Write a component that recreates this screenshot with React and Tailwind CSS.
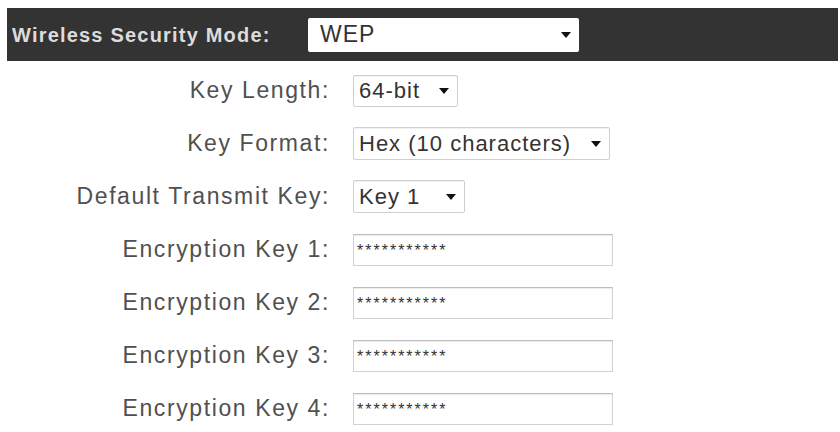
import React from "react";

const Arrow = () => (
  <svg width="10" height="6" viewBox="0 0 10 6" className="shrink-0">
    <path d="M0 0 H10 L5 6 Z" fill="#111" />
  </svg>
);

const Select = ({ value, width, height = 32 }) => (
  <div
    className="flex items-center justify-between bg-white border border-[#cfcfcf] rounded-[2px] pl-[5px] pr-[8px] shadow-[inset_0_1px_1px_rgba(0,0,0,0.06)]"
    style={{ width, height }}
  >
    <span className="text-[22px] tracking-[1px] text-[#333] leading-none">{value}</span>
    <Arrow />
  </div>
);

const KeyInput = () => (
  <div className="w-[260px] h-[32px] bg-white border border-[#d2d2d2] border-t-[#bdbdbd] pl-[3px] pt-[4px] shadow-[inset_0_1px_1px_rgba(0,0,0,0.08)]">
    <span className="text-[16px] tracking-[2px] text-[#333] leading-none">***********</span>
  </div>
);

const Row = ({ label, children }) => (
  <div className="flex items-center h-[53px]">
    <div className="w-[330px] text-right text-[23px] tracking-[1.6px] text-[#505050] leading-none">{label}</div>
    <div className="ml-[23px] flex items-center">{children}</div>
  </div>
);

export default function App() {
  return (
    <div className="w-[840px] h-[432px] bg-white overflow-hidden font-['Liberation_Sans',Arial,sans-serif]">
      <div className="pt-[8px] pl-[7px] pr-[2px]">
        <div className="h-[53px] bg-[#333333] flex items-center pl-[5px]">
          <div className="w-[296px] text-[20px] font-bold tracking-[1.2px] text-[#dcdcdc] leading-none">
            Wireless Security Mode:
          </div>
          <div className="w-[271px] h-[34px] bg-white rounded-[2px] flex items-center justify-between pl-[12px] pr-[8px]">
            <span className="text-[23px] tracking-[1px] text-[#333] leading-none">WEP</span>
            <Arrow />
          </div>
        </div>
      </div>
      <div className="mt-[3px]">
        <Row label="Key Length:">
          <Select value="64-bit" width={105} />
        </Row>
        <Row label="Key Format:">
          <Select value="Hex (10 characters)" width={257} height={33} />
        </Row>
        <Row label="Default Transmit Key:">
          <Select value="Key 1" width={112} height={33} />
        </Row>
        <Row label="Encryption Key 1:">
          <KeyInput />
        </Row>
        <Row label="Encryption Key 2:">
          <KeyInput />
        </Row>
        <Row label="Encryption Key 3:">
          <KeyInput />
        </Row>
        <Row label="Encryption Key 4:">
          <KeyInput />
        </Row>
      </div>
    </div>
  );
}
